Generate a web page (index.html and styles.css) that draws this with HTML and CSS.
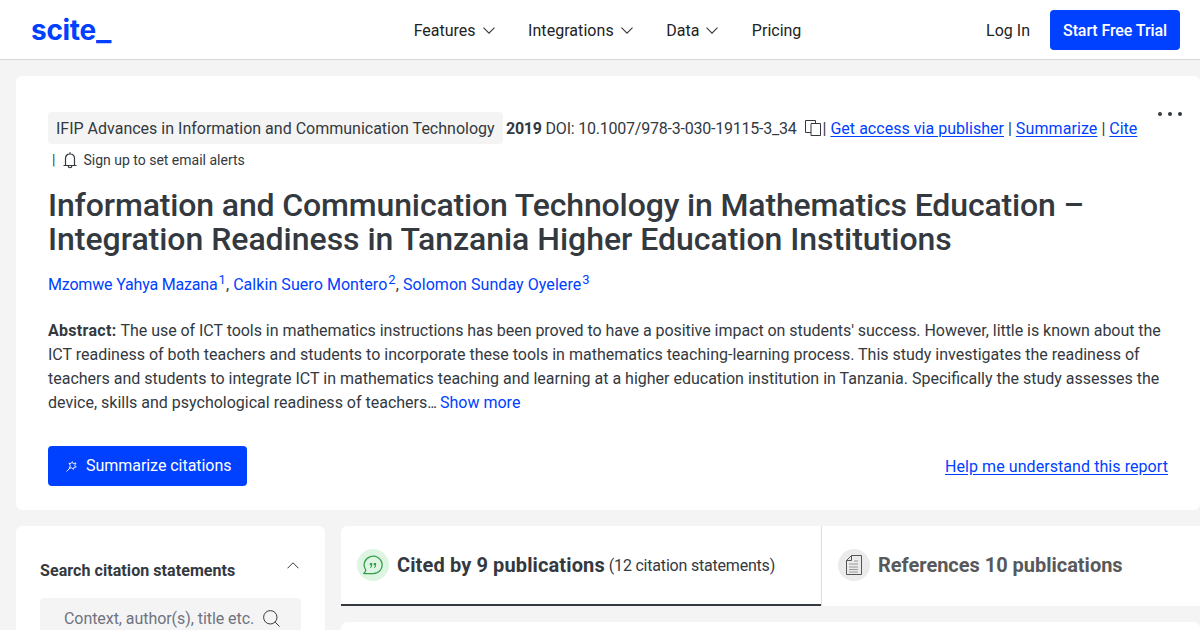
FILE: index.html
```
<!DOCTYPE html>
<html lang="en">
<head>
  <meta charset="UTF-8" />
  <meta name="viewport" content="width=device-width, initial-scale=1.0"/>
  <title>Information and Communication Technology in Mathematics Education – scite</title>
  <link rel="stylesheet" href="styles.css">
</head>

<body>
  <header class="header">
    <a class="logo" href="#"><span class="logo-text">scite</span><span class="logo-text logo-line">_</span></a>
    <nav class="nav">
      <a class="nav-item" href="#">Features
        <svg class="chevron" width="12" height="7" viewBox="0 0 12 7"><path d="M.5 .7L6 6.2L11.5 .7"/></svg>
      </a>
      <a class="nav-item nav-integrations" href="#">Integrations
        <svg class="chevron" width="12" height="7" viewBox="0 0 12 7"><path d="M.5 .7L6 6.2L11.5 .7"/></svg>
      </a>
      <a class="nav-item" href="#">Data
        <svg class="chevron" width="12" height="7" viewBox="0 0 12 7"><path d="M.5 .7L6 6.2L11.5 .7"/></svg>
      </a>
      <a class="nav-item" href="#">Pricing</a>
    </nav>
    <div class="account">
      <a class="login" href="#">Log In</a>
      <a class="trial-button" href="#">Start Free Trial</a>
    </div>
  </header>

  <main class="page">
    <section class="card paper">
      <div class="paper-top">
        <div class="meta">
          <span class="journal">IFIP Advances in Information and Communication Technology</span>
          <b class="year">2019</b>
          <span class="doi">DOI: 10.1007/978-3-030-19115-3_34</span>
          <svg class="copy-icon" width="17" height="17" viewBox="0 0 17 17"><path d="M6 12.5H.5V.5H10.5V3M6 3.5H15.5V15.5H6Z"/></svg><span class="bar">|</span>
          <a class="link access" href="#">Get access via publisher</a>
          <span class="bar">|</span>
          <a class="link summarize" href="#">Summarize</a>
          <span class="bar">|</span>
          <a class="link" href="#">Cite</a>
          <span class="alerts">
            <span>|</span>
            <svg class="bell-icon" width="14" height="17" viewBox="0 0 14 17"><path d="M.5 13.5H13.5M2.5 13.2V6.5C2.5 3.7 4.4 2 7 2S11.5 3.7 11.5 6.5V13.2M5.2 14C5.2 16.3 8.8 16.3 8.8 14M7 .3V2"/></svg>
            <span class="alerts-text">Sign up to set email alerts</span>
          </span>
        </div>
        <div class="dots"><i></i><i></i><i></i></div>
      </div>

      <h1 class="title"><span class="title-first">Information and Communication Technology in Mathematics Education –</span> Integration Readiness in Tanzania Higher Education Institutions</h1>

      <div class="authors">
        <span><a class="author-first" href="#">Mzomwe Yahya Mazana</a><sup>1</sup>,</span>
        <span><a href="#">Calkin Suero Montero</a><sup>2</sup>,</span>
        <span><a href="#">Solomon Sunday Oyelere</a><sup>3</sup></span>
      </div>

      <p class="abstract"><b>Abstract:</b> <span class="tight">The use of ICT tools in mathematics instructions has been proved to have a positive impact on students' success. However, little is known about the</span> ICT readiness of both teachers and students to incorporate these tools in mathematics teaching-learning process. This study investigates the readiness of teachers and students to integrate ICT in mathematics teaching and learning at a higher education institution in Tanzania. Specifically the study assesses the device, skills and psychological readiness of teachers<span class="ellipsis">...</span> <a href="#">Show more</a></p>

      <div class="actions">
        <button type="button" class="summarize-button">
          <svg width="11" height="11" viewBox="0 0 11 11"><path d="M.5 10.5L4.5 6.5M3 2.2L5 2.5L6.3 .7L7.2 2.7L10 2L8.7 4.4L10.3 6L8 6.3L7.5 8.4L5.8 6.8L3.2 7.2L4.4 4.8Z"/></svg>
          Summarize citations
        </button>
        <a class="link help" href="#">Help me understand this report</a>
      </div>
    </section>

    <div class="columns">
      <aside class="card sidebar">
        <div class="sidebar-head">
          <b>Search citation statements</b>
          <svg class="chevron" width="12" height="7" viewBox="0 0 12 7"><path d="M.5 6.3L6 .8L11.5 6.3"/></svg>
        </div>
        <div class="search">
          <span>Context, author(s), title etc.</span>
          <svg width="17" height="17" viewBox="0 0 17 17"><circle cx="7.3" cy="7.3" r="6.7"/><path d="M12.2 12.2L16.5 16.5"/></svg>
        </div>
      </aside>

      <div class="results">
        <div class="tabs">
          <div class="tab active">
            <span class="tab-icon green">
              <svg width="20" height="20" viewBox="0 0 20 20">
                <path class="bubble" d="M1.7 18.6H10.3A9 8.7 0 1 0 2.5 14.5C2.9 15.6 2.3 17.2 .9 18.3Z"/>
                <path class="quotes" d="M6.8 8H9.2V10C9.2 11.8 8.4 12.7 7 13V12.2C7.8 11.9 8 11.4 8 10.3H6.8ZM10.7 8H13.1V10C13.1 11.8 12.3 12.7 10.9 13V12.2C11.7 11.9 11.9 11.4 11.9 10.3H10.7Z"/>
              </svg>
            </span>
            <b class="tab-title">Cited by 9 publications</b>
            <span class="tab-note">(12 citation statements)</span>
          </div>
          <div class="tab">
            <span class="tab-icon gray">
              <svg width="16" height="20" viewBox="0 0 16 20">
                <path class="sheet" d="M5.5 .5H15.5V19.5H.5V5.5ZM5.5 .5V5.5H.5"/>
                <path class="lines" d="M8 6H12M3 9H12M3 12H12M3 14.5H12M3 17H12"/>
              </svg>
            </span>
            <b class="tab-title references">References 10 publications</b>
          </div>
        </div>
        <div class="card result"></div>
      </div>
    </div>
  </main>
</body>
</html>
```
FILE: styles.css
```
* {
  box-sizing: border-box;
}

body {
  margin: 0;
  height: 630px;
  overflow: hidden;
  font-family: Roboto, sans-serif;
  font-size: 16px;
  line-height: 24px;
  color: #33393f;
  background: #f4f4f4;
}

a {
  color: #0040ff;
  text-decoration: none;
}

svg {
  fill: none;
  stroke: #33393f;
  flex-shrink: 0;
}

/* Header */
.header {
  display: grid;
  grid-template-columns: 1fr auto 1fr;
  align-items: center;
  height: 60px;
  padding: 0 20px 0 31px;
  background: #fff;
  border-bottom: 1px solid #d8d8d8;
}

.logo {
  display: flex;
}

.logo-text {
  font-family: Inter, sans-serif;
  font-size: 28px;
  font-weight: 700;
  line-height: 34px;
  letter-spacing: -0.3px;
}

.logo-line {
  transform: scaleX(1.15);
  transform-origin: left;
}

.nav {
  display: flex;
  gap: 33.5px;
  padding: 2px 0 0 4px;
}

.nav-item {
  display: flex;
  align-items: center;
  gap: 7px;
  color: #222;
}

.nav-item .chevron {
  stroke-width: 1.1;
}

.nav-integrations {
  letter-spacing: 0.05px;
}

.account {
  display: flex;
  justify-content: flex-end;
  align-items: center;
  gap: 20px;
}

.login {
  padding-top: 2px;
  color: #222;
}

.trial-button {
  width: 130px;
  height: 40px;
  line-height: 41px;
  border-radius: 4px;
  background: #0040ff;
  color: #fff;
  font-weight: 500;
  letter-spacing: -0.1px;
  text-align: center;
}

/* Paper */
.page {
  padding: 16px 0 0 16px;
}

.card {
  background: #fff;
  border-radius: 6px;
}

.paper {
  height: 434px;
  padding: 36px 32px 24px;
}

.paper-top {
  display: flex;
  height: 64px;
  margin-right: -14px;
}

.meta {
  flex: 1;
  line-height: 30px;
}

.journal {
  display: inline-block;
  height: 32px;
  line-height: 34px;
  padding: 0 8px;
  border-radius: 4px;
  background: #f4f4f4;
}

.year {
  margin-left: -0.5px;
  letter-spacing: -0.3px;
}

.doi {
  letter-spacing: -0.22px;
  margin-right: 4px;
}

.copy-icon {
  vertical-align: -3px;
  margin-right: 1px;
}

.link {
  text-decoration: underline;
  text-underline-offset: 2px;
}

.access {
  letter-spacing: 0.03px;
}

.summarize {
  letter-spacing: 0.1px;
}

.alerts {
  display: inline-flex;
  align-items: center;
  gap: 7px;
  height: 32px;
  margin-left: 4px;
  font-size: 14px;
  vertical-align: top;
}

.bell-icon {
  margin: 0 -1px 0 1px;
  stroke-width: 1.2;
}

.dots {
  display: flex;
  gap: 6px;
}

.dots i {
  width: 4px;
  height: 4px;
  border-radius: 50%;
  background: #33393f;
}

.title {
  margin: 12px 0 0;
  font-size: 32px;
  font-weight: 500;
  line-height: 34px;
  letter-spacing: -0.03px;
}

.title-first {
  letter-spacing: -0.14px;
}

.authors {
  display: flex;
  gap: 4px;
  margin-top: 17px;
  letter-spacing: 0.06px;
}

.author-first {
  letter-spacing: -0.18px;
}

.authors sup {
  margin-left: 1px;
  font-size: 13px;
  line-height: 0;
  color: #0040ff;
}

.abstract {
  margin: 22px 0 0;
}

.abstract b {
  letter-spacing: 0.3px;
}

.tight {
  letter-spacing: -0.04px;
}

.ellipsis {
  letter-spacing: -1.3px;
}

.actions {
  display: flex;
  justify-content: space-between;
  align-items: center;
  margin-top: 31px;
}

.summarize-button {
  display: flex;
  align-items: center;
  gap: 9px;
  width: 199px;
  height: 40px;
  padding: 0 0 0 18px;
  border: none;
  border-radius: 4px;
  background: #0040ff;
  color: #fff;
  font: inherit;
  letter-spacing: -0.04px;
}

.summarize-button svg {
  margin-top: 1px;
  stroke: #fff;
  stroke-width: 0.9;
}

.help {
  padding-top: 2px;
  letter-spacing: 0.07px;
}

/* Sidebar and tabs */
.columns {
  display: flex;
  gap: 16px;
  height: 104px;
  margin-top: 16px;
  overflow: hidden;
}

.sidebar {
  width: 309px;
  height: 120px;
  padding: 33px 24px;
}

.sidebar-head {
  display: flex;
  justify-content: space-between;
  padding-right: 2px;
  letter-spacing: 0.07px;
}

.sidebar-head .chevron {
  margin-top: 3px;
}

.search {
  display: flex;
  align-items: center;
  gap: 9px;
  height: 40px;
  margin-top: 15px;
  padding: 1px 0 0 24px;
  border-radius: 4px;
  background: #f4f4f4;
  color: #6f7380;
  letter-spacing: -0.06px;
}

.results {
  flex: 1;
}

.tabs {
  display: flex;
  height: 80px;
  background: #fff;
  border-radius: 6px 0 0 0;
}

.tab {
  display: flex;
  align-items: center;
  flex: 1;
  padding: 0 16px 2px;
}

.tab.active {
  flex: 0 0 481px;
  border-right: 1px solid #dedede;
  box-shadow: inset 0 -2px #33393f;
}

.tab-icon {
  display: flex;
  align-items: center;
  justify-content: center;
  width: 32px;
  height: 32px;
  margin-right: 8px;
  border-radius: 50%;
}

.green {
  background: #dff5e3;
}

.gray {
  background: #ebebeb;
}

.bubble {
  stroke: #37a04a;
  stroke-width: 1.3;
}

.quotes {
  fill: #37a04a;
  stroke: none;
}

.sheet {
  stroke: #555;
}

.lines {
  stroke: #999;
}

.tab-title {
  font-size: 20px;
  letter-spacing: 0.12px;
}

.references {
  color: #58595b;
  letter-spacing: -0.02px;
}

.tab-note {
  margin-left: 4px;
  padding-top: 2px;
  letter-spacing: -0.2px;
}

.result {
  height: 40px;
  margin-top: 16px;
}
```
